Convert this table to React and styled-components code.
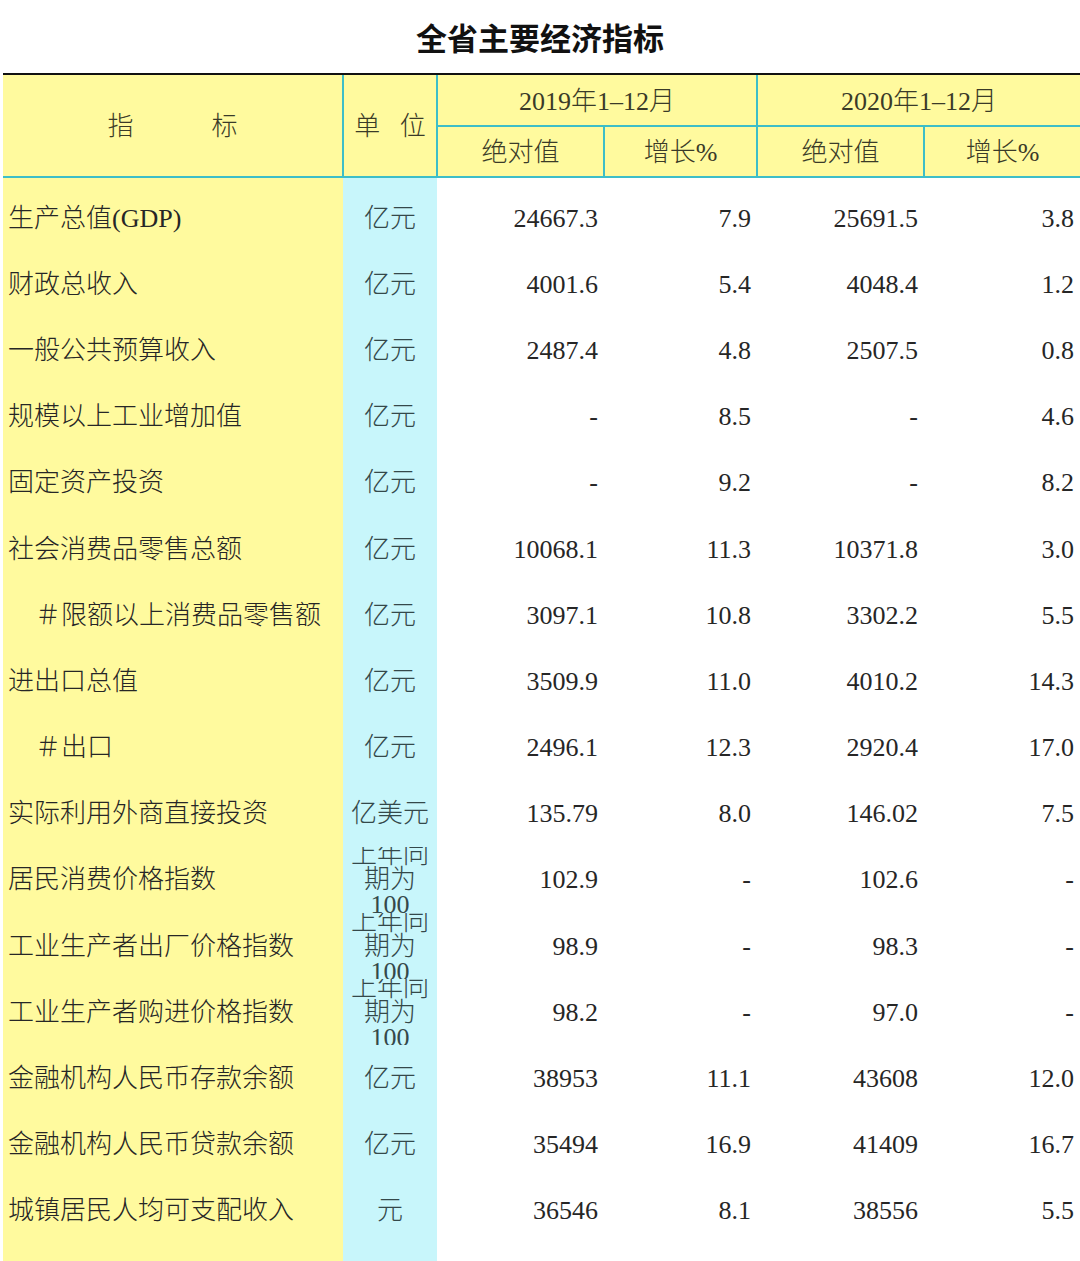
import styled, { createGlobalStyle } from 'styled-components'

const GlobalStyle = createGlobalStyle`
  html, body {
    margin: 0;
    padding: 0;
    background: #ffffff;
  }
  body {
    font-family: "Liberation Serif", "Noto Sans CJK SC", serif;
    font-weight: 300;
    color: #2a2a2a;
  }
`

const YELLOW = '#fffa9e'
const BLUE = '#c8f6fb'
const TEAL = '#3dbec8'

const Page = styled.div`
  display: flex;
  flex-direction: column;
  height: 1261px;
  overflow: hidden;
`

const Title = styled.h1`
  margin: 0;
  height: 73px;
  display: flex;
  align-items: center;
  justify-content: center;
  font-family: "Noto Sans CJK SC", sans-serif;
  font-size: 31px;
  font-weight: 700;
  color: #111111;
`

const Table = styled.div`
  display: flex;
  flex-direction: column;
  flex: 1;
  margin-left: 3px;
`

const Header = styled.div`
  display: grid;
  grid-template-columns: 339px 92px 165px 151px 165px 155px;
  grid-template-rows: 50px 49px;
  gap: 2px;
  background: ${TEAL};
  border-top: 2px solid #111111;
  border-bottom: 2px solid ${TEAL};
`

const HeadCell = styled.div`
  display: flex;
  align-items: center;
  justify-content: center;
  padding-bottom: 4px;
  box-sizing: border-box;
  background: ${YELLOW};
  font-size: 26px;
  white-space: pre;
  color: #3a3a28;
  grid-row: ${(p) => p.$rows || 'auto'};
  grid-column: ${(p) => p.$cols || 'auto'};
`

const Body = styled.div`
  display: flex;
  flex: 1;
`

const Column = styled.div`
  display: flex;
  flex-direction: column;
  width: ${(p) => p.$width}px;
  background: ${(p) => p.$bg || '#ffffff'};
  padding-top: 7px;
  box-sizing: border-box;
`

const Cell = styled.div`
  height: 66.2px;
  flex-shrink: 0;
  display: flex;
  align-items: center;
  overflow: hidden;
  font-size: 26px;
  line-height: 25px;
  box-sizing: border-box;
  justify-content: ${(p) =>
    p.$align === 'center' ? 'center' : p.$align === 'right' ? 'flex-end' : 'flex-start'};
  text-align: ${(p) => p.$align || 'left'};
  padding-left: ${(p) => (p.$indent ? 32 : p.$align === 'left' ? 5 : 4)}px;
  padding-right: ${(p) => (p.$align === 'right' ? 6 : 4)}px;
  color: ${(p) => (p.$align === 'center' ? '#34484a' : '#262626')};
`

const INDEX = '上年同期为100'

const rows = [
  ['生产总值(GDP)', '亿元', '24667.3', '7.9', '25691.5', '3.8'],
  ['财政总收入', '亿元', '4001.6', '5.4', '4048.4', '1.2'],
  ['一般公共预算收入', '亿元', '2487.4', '4.8', '2507.5', '0.8'],
  ['规模以上工业增加值', '亿元', '-', '8.5', '-', '4.6'],
  ['固定资产投资', '亿元', '-', '9.2', '-', '8.2'],
  ['社会消费品零售总额', '亿元', '10068.1', '11.3', '10371.8', '3.0'],
  ['＃限额以上消费品零售额', '亿元', '3097.1', '10.8', '3302.2', '5.5', true],
  ['进出口总值', '亿元', '3509.9', '11.0', '4010.2', '14.3'],
  ['＃出口', '亿元', '2496.1', '12.3', '2920.4', '17.0', true],
  ['实际利用外商直接投资', '亿美元', '135.79', '8.0', '146.02', '7.5'],
  ['居民消费价格指数', INDEX, '102.9', '-', '102.6', '-'],
  ['工业生产者出厂价格指数', INDEX, '98.9', '-', '98.3', '-'],
  ['工业生产者购进价格指数', INDEX, '98.2', '-', '97.0', '-'],
  ['金融机构人民币存款余额', '亿元', '38953', '11.1', '43608', '12.0'],
  ['金融机构人民币贷款余额', '亿元', '35494', '16.9', '41409', '16.7'],
  ['城镇居民人均可支配收入', '元', '36546', '8.1', '38556', '5.5'],
]

const columns = [
  { width: 340, bg: YELLOW, align: 'left' },
  { width: 94, bg: BLUE, align: 'center' },
  { width: 167, align: 'right' },
  { width: 153, align: 'right' },
  { width: 167, align: 'right' },
  { width: 156, align: 'right' },
]

export default function App() {
  return (
    <>
      <GlobalStyle />
      <Page>
        <Title>全省主要经济指标</Title>
        <Table>
          <Header>
            <HeadCell $rows="1 / 3" $cols="1">{'指　　　标'}</HeadCell>
            <HeadCell $rows="1 / 3" $cols="2">{'单   位'}</HeadCell>
            <HeadCell $cols="3 / 5">2019年1–12月</HeadCell>
            <HeadCell $cols="5 / 7">2020年1–12月</HeadCell>
            <HeadCell>绝对值</HeadCell>
            <HeadCell>增长%</HeadCell>
            <HeadCell>绝对值</HeadCell>
            <HeadCell>增长%</HeadCell>
          </Header>
          <Body>
            {columns.map((col, ci) => (
              <Column key={ci} $width={col.width} $bg={col.bg}>
                {rows.map((row, ri) => (
                  <Cell key={ri} $align={col.align} $indent={ci === 0 && row[6]}>
                    {row[ci]}
                  </Cell>
                ))}
              </Column>
            ))}
          </Body>
        </Table>
      </Page>
    </>
  )
}
